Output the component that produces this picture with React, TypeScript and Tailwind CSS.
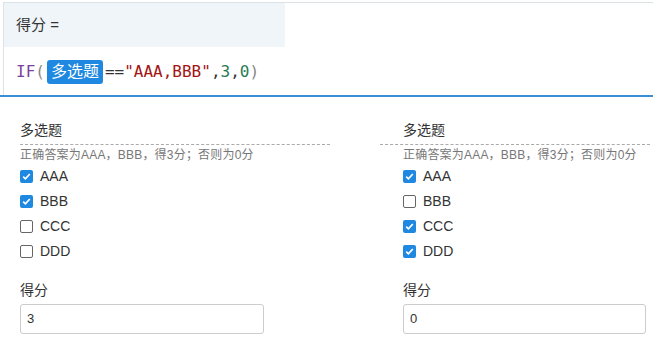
import React from "react";

const font = { fontFamily: '"Liberation Sans","Noto Sans CJK SC",sans-serif' };
const mono = { fontFamily: '"DejaVu Sans Mono","Liberation Mono","Noto Sans CJK SC",monospace' };

function Box({ checked, label }: { checked: boolean; label: string }) {
  return (
    <div className="flex items-center h-[25px]">
      {checked ? (
        <div className="w-[13px] h-[13px] rounded-[2px] bg-[#1f88e0] flex items-center justify-center">
          <svg width="11" height="11" viewBox="0 0 11 11">
            <path d="M2.2 5.6 L4.4 7.8 L8.8 3" stroke="white" strokeWidth="1.7" fill="none" />
          </svg>
        </div>
      ) : (
        <div className="w-[13px] h-[13px] rounded-[2px] border border-[#666] bg-white" />
      )}
      <span className="ml-[7px] text-[14px] text-[#333]">{label}</span>
    </div>
  );
}

export default function App() {
  return (
    <div className="w-[653px] h-[342px] bg-white overflow-hidden relative" style={font}>
      <div className="pt-[2px]">
        <div className="ml-[3px] border-l border-t border-[#dde2e6] h-[93px] flex flex-col">
          <div className="w-[281px] h-[44px] bg-[#f0f5f9] flex items-center pl-[12px] text-[15px] text-[#333]">
            得分 =
          </div>
          <div className="flex items-center pl-[12px] pt-[1px] h-[48px] text-[16px]" style={mono}>
            <span className="text-[#7b3fa0]">IF</span>
            <span className="text-[#888]">(</span>
            <span
              className="ml-[2px] mr-[2px] bg-[#1f88e0] text-white rounded-[3px] px-[4px] h-[24px] flex items-center text-[16px]"
              style={font}
            >
              多选题
            </span>
            <span className="text-[#333]">==</span>
            <span className="text-[#a31515]">"AAA,BBB"</span>
            <span className="text-[#333]">,</span>
            <span className="text-[#2a7a55]">3</span>
            <span className="text-[#333]">,</span>
            <span className="text-[#2a7a55]">0</span>
            <span className="text-[#888]">)</span>
          </div>
        </div>
        <div className="h-[2px] bg-[#3b8fd8]" />
      </div>
      <div className="flex pl-[20px] pr-[3px] pt-[23px] gap-[50px]">
        <div className="w-[310px] flex flex-col">
          <div className="text-[14px] text-[#333] leading-[20px]">多选题</div>
          <div className="border-b border-dashed border-[#aaa] mt-[4px]" />
          <div className="text-[12px] tracking-[0.2px] text-[#777] leading-[18px] mt-[1px]">正确答案为AAA，BBB，得3分；否则为0分</div>
          <div className="flex flex-col">
            <Box checked label="AAA" />
            <Box checked label="BBB" />
            <Box checked={false} label="CCC" />
            <Box checked={false} label="DDD" />
          </div>
          <div className="text-[14px] text-[#333] leading-[20px] mt-[16px]">得分</div>
          <div className="mt-[4px] w-[244px] h-[30px] border border-[#ccc] rounded-[3px] flex items-center px-[6px] text-[13px] text-[#333]">
            3
          </div>
        </div>
        <div className="flex-1 flex flex-col">
          <div className="pl-[23px] text-[14px] text-[#333] leading-[20px]">多选题</div>
          <div className="border-b border-dashed border-[#aaa] mt-[4px]" />
          <div className="pl-[23px] text-[12px] tracking-[0.2px] text-[#777] leading-[18px] mt-[1px]">正确答案为AAA，BBB，得3分；否则为0分</div>
          <div className="pl-[23px] flex flex-col">
            <Box checked label="AAA" />
            <Box checked={false} label="BBB" />
            <Box checked label="CCC" />
            <Box checked label="DDD" />
          </div>
          <div className="pl-[23px] text-[14px] text-[#333] leading-[20px] mt-[16px]">得分</div>
          <div className="ml-[23px] mt-[4px] w-[243px] h-[30px] border border-[#ccc] rounded-[3px] flex items-center px-[6px] text-[13px] text-[#333]">
            0
          </div>
        </div>
      </div>
    </div>
  );
}
